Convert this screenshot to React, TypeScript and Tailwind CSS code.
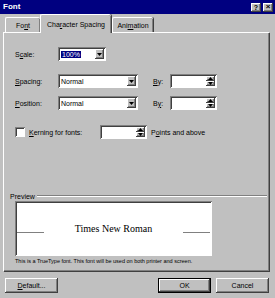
const raised =
  "shadow-[inset_-1px_-1px_#404040,inset_1px_1px_#ffffff,inset_-2px_-2px_#808080]";
const sunken =
  "shadow-[inset_1px_1px_#808080,inset_-1px_-1px_#ffffff,inset_2px_2px_#404040]";

function Down() {
  return (
    <svg width="5" height="3" viewBox="0 0 5 3">
      <path d="M0 0h5L2.5 3z" fill="#000" />
    </svg>
  );
}

function Up() {
  return (
    <svg width="5" height="3" viewBox="0 0 5 3">
      <path d="M0 3h5L2.5 0z" fill="#000" />
    </svg>
  );
}

function Combo({ wide, value, selected }: { wide?: boolean; value: string; selected?: boolean }) {
  return (
    <div className={`flex h-[14px] bg-white p-[2px] ${sunken} ${wide ? "w-[80px]" : "w-[48px]"}`}>
      <div className="flex flex-1 items-center pl-[1px]">
        <span className={selected ? "bg-[#000080] px-[1px] text-white" : ""}>{value}</span>
      </div>
      <div className={`flex w-[9px] items-center justify-center bg-[#c0c0c0] ${raised}`}>
        <Down />
      </div>
    </div>
  );
}

function Spinner() {
  return (
    <div className={`flex h-[14px] w-[47px] bg-white p-[2px] ${sunken}`}>
      <div className="flex-1" />
      <div className="flex w-[9px] flex-col">
        <div className={`flex flex-1 items-center justify-center bg-[#c0c0c0] ${raised}`}>
          <Up />
        </div>
        <div className={`flex flex-1 items-center justify-center bg-[#c0c0c0] ${raised}`}>
          <Down />
        </div>
      </div>
    </div>
  );
}

function U({ children }: { children: string }) {
  return <span className="underline underline-offset-[1px]">{children}</span>;
}

export default function App() {
  return (
    <div
      className="flex h-[298px] w-[275px] flex-col bg-[#c0c0c0] text-[7px] leading-none text-black"
      style={{ fontFamily: '"Liberation Sans", Arial, sans-serif' }}
    >
      {/* title bar */}
      <div className="flex h-[14px] items-center justify-between bg-[#000080] pl-[3px] pr-[2px]">
        <span className="text-[8px] font-bold text-white">Font</span>
        <div className="flex gap-[1px]">
          <div className={`flex h-[9px] w-[10px] items-center justify-center bg-[#c0c0c0] text-[7px] font-bold ${raised}`}>
            ?
          </div>
          <div className={`ml-[1px] flex h-[9px] w-[10px] items-center justify-center bg-[#c0c0c0] text-[8px] font-bold ${raised}`}>
            ×
          </div>
        </div>
      </div>

      {/* tabs */}
      <div className="relative z-10 flex h-[18px] items-end pl-[5px]">
        <div className="flex h-[15px] w-[35px] items-center justify-center rounded-t-[2px] border-l border-t border-white shadow-[inset_-1px_0_#808080]">
          Fo<U>n</U>t
        </div>
        <div className="-mb-[1px] flex h-[19px] w-[71px] items-center justify-center rounded-t-[2px] border-l border-t border-white bg-[#c0c0c0] shadow-[inset_-1px_0_#808080,1px_0_#404040]">
          Cha<U>r</U>acter Spacing
        </div>
        <div className="ml-[1px] flex h-[15px] w-[41px] items-center justify-center rounded-t-[2px] border-l border-t border-white shadow-[inset_-1px_0_#808080,1px_0_#404040]">
          Ani<U>m</U>ation
        </div>
      </div>

      {/* panel */}
      <div className="ml-[3px] flex h-[239px] w-[266px] flex-col border-l border-t border-white shadow-[inset_-1px_-1px_#808080,1px_1px_#404040]">
        <div className="mt-[14px] flex items-center pl-[11px]">
          <span className="w-[43px]">
            S<U>c</U>ale:
          </span>
          <Combo value="100%" selected />
        </div>

        <div className="mt-[13px] flex items-center pl-[11px]">
          <span className="w-[43px]">
            <U>S</U>pacing:
          </span>
          <Combo wide value="Normal" />
          <span className="ml-[15px] w-[17px]">
            <U>B</U>y:
          </span>
          <Spinner />
        </div>

        <div className="mt-[8px] flex items-center pl-[11px]">
          <span className="w-[43px]">
            <U>P</U>osition:
          </span>
          <Combo wide value="Normal" />
          <span className="ml-[15px] w-[17px]">
            B<U>y</U>:
          </span>
          <Spinner />
        </div>

        <div className="mt-[15px] flex items-center pl-[11px]">
          <div className={`h-[10px] w-[10px] bg-white ${sunken}`} />
          <span className="ml-[4px] w-[71px]">
            <U>K</U>erning for fonts:
          </span>
          <Spinner />
          <span className="ml-[4px]">
            P<U>o</U>ints and above
          </span>
        </div>

        <div className="mt-[53px] flex h-[8px] items-center pl-[6px] pr-[2px]">
          <span>Preview</span>
          <div className="ml-[2px] h-[2px] flex-1 border-b border-t border-b-white border-t-[#808080]" />
        </div>

        <div
          className={`ml-[11px] mt-[1px] flex h-[55px] w-[197px] items-center bg-white p-[2px] ${sunken}`}
        >
          <div className="mt-[8px] h-[1px] w-[27px] bg-[#808080]" />
          <span
            className="flex-1 text-center text-[10px]"
            style={{ fontFamily: '"Liberation Serif", "Times New Roman", serif' }}
          >
            Times New Roman
          </span>
          <div className="mt-[8px] h-[1px] w-[27px] bg-[#808080]" />
        </div>

        <div className="ml-[11px] mt-[3px] text-[5.5px]">
          This is a TrueType font. This font will be used on both printer and screen.
        </div>
      </div>

      {/* buttons */}
      <div className="mt-[7px] flex pl-[5px]">
        <div className={`flex h-[15px] w-[53px] items-center justify-center ${raised}`}>
          <U>D</U>efault...
        </div>
        <div className="ml-[100px] flex h-[15px] w-[53px] items-center justify-center border border-black shadow-[inset_-1px_-1px_#404040,inset_1px_1px_#ffffff,inset_-2px_-2px_#808080]">
          OK
        </div>
        <div className={`ml-[5px] flex h-[15px] w-[53px] items-center justify-center ${raised}`}>
          Cancel
        </div>
      </div>
    </div>
  );
}
